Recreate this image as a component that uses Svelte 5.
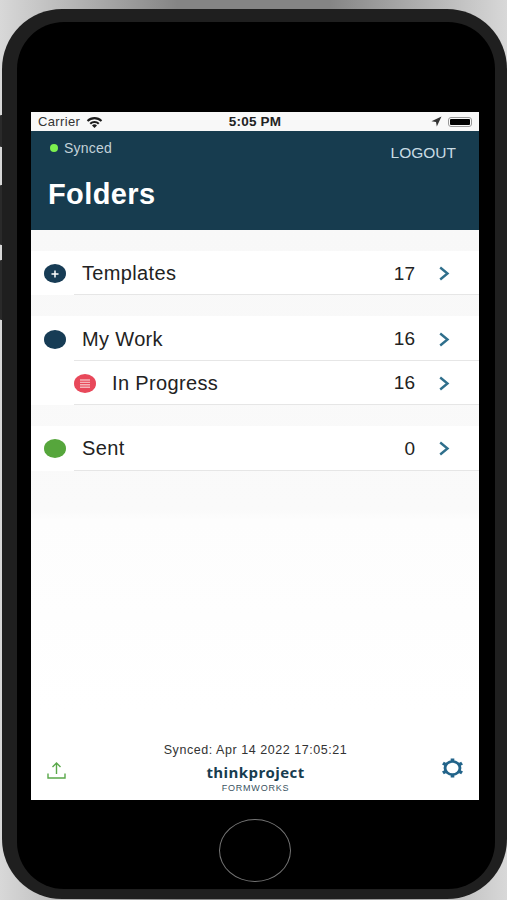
<script lang="ts">
  type Row = { label: string; count: number; dot: string; sub?: boolean };
  const groups: Row[][] = [
    [{ label: "Templates", count: 17, dot: "plus" }],
    [
      { label: "My Work", count: 16, dot: "navy" },
      { label: "In Progress", count: 16, dot: "red", sub: true }
    ],
    [{ label: "Sent", count: 0, dot: "green" }]
  ];
</script>

<div class="stage">
  <div class="phone">
    <span class="side-btn mute"></span>
    <span class="side-btn vol-up"></span>
    <span class="side-btn vol-down"></span>
    <div class="bezel">
      <div class="screen">
        <div class="statusbar">
          <div class="status-left">
            <span>Carrier</span>
            <svg width="17" height="12" viewBox="0 0 17 12">
              <path d="M0.8 4.2a11 11 0 0 1 15.4 0L14.8 5.7a9 9 0 0 0-12.6 0z" fill="#1c1c1c" />
              <path d="M3.5 6.9a7.2 7.2 0 0 1 10 0L12 8.4a5 5 0 0 0-7 0z" fill="#1c1c1c" />
              <path d="M6 9.4a3.6 3.6 0 0 1 5 0L8.5 12z" fill="#1c1c1c" />
            </svg>
          </div>
          <span class="clock">5:05 PM</span>
          <div class="status-right">
            <svg width="11" height="11" viewBox="0 0 11 11">
              <path d="M10.5 0.5L0.5 5.2L5 5.9L5.8 10.5z" fill="#333" />
            </svg>
            <span class="battery"><span class="charge"></span></span>
          </div>
        </div>

        <header class="topbar">
          <div class="topbar-row">
            <div class="synced"><span class="led"></span>Synced</div>
            <span class="logout">LOGOUT</span>
          </div>
          <h1>Folders</h1>
        </header>

        <main class="list">
          {#each groups as group}
            <section class="group">
              {#each group as row}
                <div class="row" class:sub={row.sub}>
                  <span class="dot {row.dot}">
                    {#if row.dot === "plus"}
                      <svg width="10" height="10" viewBox="0 0 10 10">
                        <path d="M5 1.5v7M1.5 5h7" stroke="#fff" stroke-width="1.5" />
                      </svg>
                    {:else if row.dot === "red"}
                      <svg width="10" height="9" viewBox="0 0 10 9">
                        <path d="M0 1h10M0 3.4h10M0 5.8h10M0 8.2h10" stroke="#f4b3b8" stroke-width="1.4" />
                      </svg>
                    {/if}
                  </span>
                  <div class="row-body">
                    <span class="label">{row.label}</span>
                    <span class="count">{row.count}</span>
                    <svg class="chev" width="12" height="15" viewBox="0 0 12 15">
                      <path d="M2.2 1.5L9.5 7.5L2.2 13.5" fill="none" stroke="#2f6f8c" stroke-width="2.4" />
                    </svg>
                  </div>
                </div>
              {/each}
            </section>
          {/each}
        </main>

        <footer class="foot">
          <svg class="upload" width="19" height="17" viewBox="0 0 19 17">
            <path d="M9.5 12V1.5M5.5 5L9.5 1L13.5 5M1 11.5v4.5h17v-4.5" fill="none" stroke="#5aa84a" stroke-width="1.4" />
          </svg>
          <div class="foot-mid">
            <div class="stamp">Synced: Apr 14 2022 17:05:21</div>
            <div class="brand">thinkproject</div>
            <div class="product">FORMWORKS</div>
          </div>
          <svg class="gear" width="23" height="20" viewBox="0 0 24 24" preserveAspectRatio="none">
            <circle cx="12" cy="12" r="7.8" fill="none" stroke="#23648a" stroke-width="3" />
            <path d="M12 0.5v4M12 19.5v4M2 6.2l3.5 2M18.5 15.8l3.5 2M2 17.8l3.5-2M18.5 8.2l3.5-2" stroke="#23648a" stroke-width="3.8" />
          </svg>
        </footer>
      </div>
      <div class="home"></div>
    </div>
  </div>
</div>

<style>
  :global(body) {
    margin: 0;
    background: #8a8a8a;
  }
  .stage {
    width: 507px;
    height: 900px;
    overflow: hidden;
    background: linear-gradient(90deg, #d8d8d8, #858585 35%, #858585 65%, #d8d8d8);
    font-family: "Liberation Sans", Arial, sans-serif;
    padding: 9px 0 0 2px;
    box-sizing: border-box;
  }
  .phone {
    position: relative;
    width: 505px;
    height: 890px;
    box-sizing: border-box;
    padding: 13px 12px 10px 15px;
    background: #1f1f1f;
    border-radius: 60px;
  }
  .side-btn {
    position: absolute;
    left: -2px;
    width: 2px;
    background: #2a2a2a;
    border-radius: 1px 0 0 1px;
  }
  .mute {
    top: 106px;
    height: 32px;
  }
  .vol-up {
    top: 176px;
    height: 60px;
  }
  .vol-down {
    top: 251px;
    height: 60px;
  }
  .bezel {
    height: 100%;
    background: #000;
    border-radius: 47px;
    padding-top: 90px;
    box-sizing: border-box;
    display: flex;
    flex-direction: column;
    align-items: center;
  }
  .screen {
    width: 448px;
    height: 688px;
    background: #fff;
    display: flex;
    flex-direction: column;
    margin-left: -2px;
  }
  .statusbar {
    height: 19px;
    background: #f8f8f8;
    display: grid;
    grid-template-columns: 1fr auto 1fr;
    align-items: center;
    padding: 0 7px;
    font-size: 13px;
    letter-spacing: 0.35px;
    color: #333;
  }
  .status-left {
    display: flex;
    align-items: center;
    gap: 6px;
  }
  .clock {
    font-weight: 700;
    font-size: 13.5px;
    letter-spacing: 0.2px;
    color: #222;
  }
  .status-right {
    display: flex;
    justify-content: flex-end;
    align-items: center;
    gap: 6px;
  }
  .battery {
    width: 24px;
    height: 10px;
    border: 1px solid #999;
    border-radius: 3px;
    padding: 1px;
    box-sizing: border-box;
    display: block;
  }
  .charge {
    display: block;
    height: 100%;
    background: #000;
    border-radius: 1px;
  }
  .topbar {
    height: 99px;
    box-sizing: border-box;
    background: #173c4f;
    padding: 9px 23px 0 19px;
    color: #fff;
  }
  .topbar-row {
    display: flex;
    justify-content: space-between;
    align-items: flex-start;
  }
  .synced {
    display: flex;
    align-items: center;
    gap: 6px;
    font-size: 14px;
    letter-spacing: 0.2px;
    color: #c3d2d9;
  }
  .led {
    width: 8px;
    height: 8px;
    border-radius: 50%;
    background: #7cf04f;
  }
  .logout {
    font-size: 15.5px;
    color: #c9dbe3;
    margin-top: 4px;
  }
  h1 {
    margin: 16px 0 0 -2px;
    font-size: 29px;
    letter-spacing: 0.4px;
    font-weight: 700;
    color: #fff;
  }
  .list {
    flex: 1;
    display: flex;
    flex-direction: column;
    gap: 21px;
    padding-top: 21px;
    background: linear-gradient(#f8f8f8, #fafafa 280px, #fdfdfd 290px, #fff 480px);
  }
  .group {
    background: #fff;
  }
  .row {
    display: flex;
    align-items: center;
    height: 44.4px;
    padding-left: 13px;
  }
  .row-body {
    flex: 1;
    align-self: stretch;
    display: flex;
    align-items: center;
    border-bottom: 1px solid #e6e6e6;
    margin-left: 8px;
    padding-left: 8px;
    padding-right: 29px;
    padding-top: 2px;
  }
  .row.sub {
    padding-left: 43px;
  }
  .row.sub .row-body {
    margin-left: -22px;
    padding-left: 38px;
  }
  .dot {
    width: 22px;
    height: 19px;
    margin-top: 1px;
    border-radius: 50%;
    flex: none;
    display: flex;
    align-items: center;
    justify-content: center;
    position: relative;
    z-index: 1;
  }
  .plus,
  .navy {
    background: #173c55;
  }
  .red {
    background: #e8485a;
  }
  .green {
    background: #56a63c;
  }
  .label {
    flex: 1;
    font-size: 20px;
    letter-spacing: 0.35px;
    color: #222;
  }
  .count {
    font-size: 19px;
    color: #222;
    margin-right: 23px;
  }
  .foot {
    height: 60px;
    box-sizing: border-box;
    background: #fff;
    display: grid;
    grid-template-columns: 1fr auto 1fr;
    align-items: start;
    padding: 4px 15px 0 16px;
  }
  .upload {
    margin-top: 18px;
  }
  .gear {
    margin-top: 14px;
    justify-self: end;
  }
  .foot-mid {
    text-align: center;
    line-height: 1;
  }
  .stamp {
    font-size: 12.5px;
    letter-spacing: 0.55px;
    color: #333;
  }
  .brand {
    font-family: "Open Sans", sans-serif;
    font-size: 15px;
    font-weight: 700;
    letter-spacing: 0.4px;
    color: #173c4f;
    margin-top: 8px;
  }
  .product {
    font-size: 9px;
    letter-spacing: 0.8px;
    color: #3a5361;
    margin-top: 4px;
  }
  .home {
    width: 70px;
    height: 61px;
    margin-top: 19px;
    border: 1.5px solid #757575;
    border-radius: 50%;
    margin-left: -2px;
  }
</style>
